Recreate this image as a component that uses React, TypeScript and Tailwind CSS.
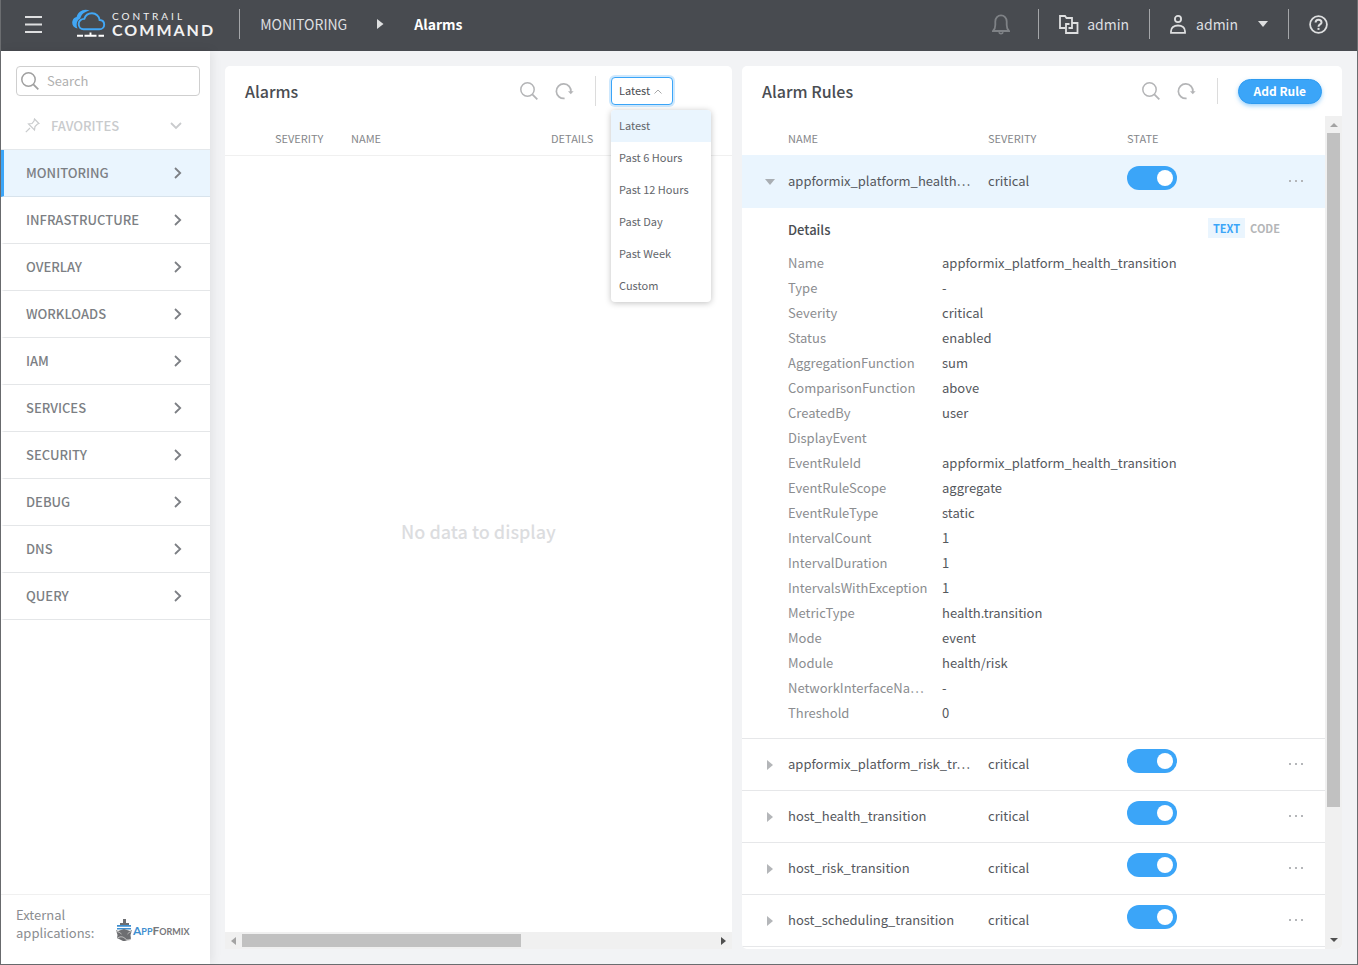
import { useState } from "react";
import clsx from "clsx";

const navItems = [
  "MONITORING",
  "INFRASTRUCTURE",
  "OVERLAY",
  "WORKLOADS",
  "IAM",
  "SERVICES",
  "SECURITY",
  "DEBUG",
  "DNS",
  "QUERY",
];

const timeRanges = [
  "Latest",
  "Past 6 Hours",
  "Past 12 Hours",
  "Past Day",
  "Past Week",
  "Custom",
];

const rules = [
  { name: "appformix_platform_health…", severity: "critical" },
  { name: "appformix_platform_risk_tr…", severity: "critical" },
  { name: "host_health_transition", severity: "critical" },
  { name: "host_risk_transition", severity: "critical" },
  { name: "host_scheduling_transition", severity: "critical" },
];

const details = [
  ["Name", "appformix_platform_health_transition"],
  ["Type", "-"],
  ["Severity", "critical"],
  ["Status", "enabled"],
  ["AggregationFunction", "sum"],
  ["ComparisonFunction", "above"],
  ["CreatedBy", "user"],
  ["DisplayEvent", ""],
  ["EventRuleId", "appformix_platform_health_transition"],
  ["EventRuleScope", "aggregate"],
  ["EventRuleType", "static"],
  ["IntervalCount", "1"],
  ["IntervalDuration", "1"],
  ["IntervalsWithException", "1"],
  ["MetricType", "health.transition"],
  ["Mode", "event"],
  ["Module", "health/risk"],
  ["NetworkInterfaceNa…", "-"],
  ["Threshold", "0"],
];

const SearchIcon = () => (
  <svg width="18" height="18" viewBox="0 0 18 18" fill="none" stroke="currentColor" className="shrink-0">
    <circle cx="7.5" cy="7.5" r="6.7" strokeWidth="1.5" />
    <path d="M12.3 12.3 17.3 17.3" strokeWidth="1.8" />
  </svg>
);

const RefreshIcon = () => (
  <svg width="19" height="18" viewBox="0 0 19 18" fill="none">
    <path
      d="M9.6 16.400A7.300 7.300 0 1 1 15.900 10"
      stroke="currentColor"
      strokeWidth="1.700"
    />
    <path d="M13 9.300h5.600l-2.800 3z" fill="currentColor" />
  </svg>
);

const ChevronRight = () => (
  <svg width="8" height="12" viewBox="0 0 8 12" fill="none" stroke="#7c7f84" strokeWidth="1.8">
    <path d="M1 1l5.2 5L1 11" />
  </svg>
);

const Separator = () => <span className="h-[30px] w-px bg-[#a4a6a9]" />;

const Logo = () => (
  <a href="#" className="flex items-center gap-[6px]">
    <svg width="34" height="30" viewBox="0 0 34 30" fill="none">
      <path
        d="M5.500 19.600C1.600 18.800-.4 15.600.4 12.200 1 9.800 2.600 8.400 4.600 8 5.700 3.600 9.500.800 13.500.700c1.700 0 3.100.300 4.200 1C12.500 2.400 9.500 5.200 8.300 9.400 4.800 10.800 3.600 16 5.500 19.600z"
        fill="#42a7f5"
      />
      <path
        d="M11.500 20.300h15.700c3 0 5-2.100 5-4.600 0-2.600-1.900-4.500-4.600-4.700C27.200 7.200 24 4.300 20 4.300c-3.900 0-6.700 2.300-7.700 5.600-3.100-.1-5.600 2.200-5.600 5.100 0 3.200 2.100 5.300 4.800 5.300z"
        stroke="#42a7f5"
        strokeWidth="1.900"
      />
      <path
        d="M18.500 23.500v2.500M5 26.800h6M12.500 26.800h12M26.500 26.800H32"
        stroke="#fff"
        strokeWidth="1.900"
      />
    </svg>
    <span className="flex flex-col font-[Lato,sans-serif] text-[#f2f2f2]">
      <span className="text-[10px] leading-[12px] tracking-[3px]">CONTRAIL</span>
      <span className="text-[16px] leading-[16px] font-bold tracking-[2px]">
        COMMAND
      </span>
    </span>
  </a>
);

const Header = () => (
  <header className="flex h-[51px] shrink-0 items-center justify-between bg-[#484b50] pr-[29px] pb-[3px] pl-6 text-[14px] text-[#dedfe0]">
    <div className="flex items-center">
      <button aria-label="Toggle menu" className="mr-[30px]">
        <svg width="17" height="17" viewBox="0 0 17 17" stroke="#dedfe0" strokeWidth="1.800">
          <path d="M0 1h17M0 8.500h17M0 16h17" />
        </svg>
      </button>
      <Logo />
      <span className="mr-5 ml-6 flex">
        <Separator />
      </span>
      <a href="#">MONITORING</a>
      <svg width="7" height="10" viewBox="0 0 7 10" className="mx-[30px]">
        <path d="M0 0l6.500 5L0 10z" fill="#dedfe0" />
      </svg>
      <span className="font-bold text-white">Alarms</span>
    </div>
    <div className="flex items-center gap-5">
      <button aria-label="Notifications" className="mr-2 text-[#7f8286]">
        <svg width="18" height="21" viewBox="0 0 18 21" fill="none" stroke="currentColor" strokeWidth="1.800">
          <path d="M1 17h16c-1.700-1.500-2.300-3-2.300-6V7.500C14.700 3.800 12.200 1.400 9 1.400S3.300 3.800 3.300 7.500V11c0 3-.6 4.500-2.300 6z" />
          <path d="M7 18.200c.3 1 1 1.500 2 1.500s1.700-.5 2-1.500" />
        </svg>
      </button>
      <Separator />
      <button className="flex items-center gap-2">
        <svg width="20" height="19" viewBox="0 0 20 19" fill="none" stroke="currentColor" strokeWidth="1.800">
          <path d="M6.500 13H1V1h5l1.500 2H13v10H9.500" />
          <path d="M13 8h5.500v10H7V9h3.500" />
        </svg>
        admin
      </button>
      <Separator />
      <button className="flex items-center gap-[10px]">
        <svg width="16" height="19" viewBox="0 0 16 19" fill="none" stroke="currentColor" strokeWidth="1.800">
          <circle cx="8" cy="4" r="3.100" />
          <path d="M1 17.800v-1.600c0-3.400 2.900-5.700 7-5.700s7 2.300 7 5.700v1.600z" />
        </svg>
        admin
        <svg width="10" height="6" viewBox="0 0 10 6" className="ml-[10px]">
          <path d="M0 0h10L5 6z" fill="currentColor" />
        </svg>
      </button>
      <Separator />
      <button aria-label="Help">
        <svg width="19" height="19" viewBox="0 0 19 19" fill="none" stroke="currentColor" strokeWidth="1.800">
          <circle cx="9.500" cy="9.500" r="8.400" />
          <path d="M6.600 7.600C6.600 5.800 7.800 4.800 9.500 4.800s3 1 3 2.600c0 2-3 2-3 4.300" strokeWidth="2" />
          <path d="M9.500 12.900v2" strokeWidth="2" />
        </svg>
      </button>
    </div>
  </header>
);

const AppFormixLogo = () => (
  <svg width="76" height="24" viewBox="0 0 76 24">
    <path d="M7 1h3v4h3v2H4V5h3z" fill="#6d6e71" />
    <path d="M1 7h14v1.800H1zM1 10h14v1.500H1z" fill="#3f8fd0" />
    <path d="M2 13l6-2 6 2 2-1-1.500 5 .5 4-6 2H7l-6-3 .5-3L0 12z" fill="#6d6e71" />
    <path d="M0 13.500c3 0 4 1.500 5.500 2.500M16 13.500c-2 0-3.500 1.500-4.500 2.500M1 20.500c3-2.500 6-2 8 0s4 2 6 .5" stroke="#c8c8c8" fill="none" />
    <text
      x="17"
      y="17"
      fontFamily="Lato, sans-serif"
      fontWeight="700"
      fontSize="12"
      fill="#3f8fd0"
    >
      A<tspan fontSize="9">PP</tspan>
      <tspan fill="#77787b">F</tspan>
      <tspan fontSize="9" fill="#77787b">ORMIX</tspan>
    </text>
  </svg>
);

const Sidebar = () => (
  <aside className="z-10 flex w-[209px] shrink-0 flex-col bg-white text-[13px] text-[#7c7f84] shadow-[2px_0_10px_rgba(0,0,0,0.08)]">
    <label className="mt-[15px] mr-[10px] ml-[15px] flex h-[30px] items-center gap-2 rounded-[4px] border border-[#cfcfcf] pl-1 text-[#a0a0a0]">
      <SearchIcon />
      <input
        type="search"
        aria-label="Search"
        placeholder="Search"
        className="w-full min-w-0 pb-px outline-none placeholder:text-[#b0b0b0]"
      />
    </label>
    <button className="flex h-[54px] items-center border-b border-[#e4e8eb] pt-[6px] pr-7 pl-6 text-[#c9cbcd]">
      <svg width="15" height="15" viewBox="0 0 15 15" fill="none" stroke="currentColor" strokeWidth="1.200">
        <path d="M9.500 1l4.500 4.500-1.500.5-2.500 2.500-.5 3.500-6-6L7 5.500 9 3zM5 10l-4.200 4.200" />
      </svg>
      <span className="ml-[11px] font-medium">FAVORITES</span>
      <svg width="12" height="8" viewBox="0 0 12 8" fill="none" stroke="currentColor" strokeWidth="1.800" className="ml-auto">
        <path d="M1 1l5 5 5-5" />
      </svg>
    </button>
    <nav>
      {navItems.map((item, i) => (
        <a
          key={item}
          href="#"
          className={clsx(
            "flex h-[47px] items-center justify-between border-b border-l-[3px] pr-7 pl-[22px] font-medium",
            i === 0
              ? "border-b-[#d8e3ec] border-l-[#3ba5f8] bg-[#eaf5fe]"
              : "border-b-[#e4e6e8] border-l-transparent"
          )}
        >
          {item}
          <ChevronRight />
        </a>
      ))}
    </nav>
    <div className="mt-auto flex h-[70px] items-start justify-between border-t border-[#f0f0f0] pt-[11px] pr-[18px] pl-[15px] leading-[18px] text-[#8b8d90]">
      <span className="w-20">External applications:</span>
      <a href="#" aria-label="AppFormix" className="pt-3">
        <AppFormixLogo />
      </a>
    </div>
  </aside>
);

const TimeRange = () => {
  const [range, setRange] = useState("Latest");
  return (
    <div className="relative text-[11px]">
      <select
        aria-label="Time range"
        value={range}
        onChange={(e) => setRange(e.target.value)}
        className="block h-7 w-[62px] appearance-none rounded-[4px] border border-[#3ba5f8] bg-white pb-px pl-[7px] text-[#4a4d52] shadow-[0_0_0_2px_rgba(59,165,248,0.25)] outline-none"
      >
        {timeRanges.map((r) => (
          <option key={r}>{r}</option>
        ))}
      </select>
      <svg width="8" height="5" viewBox="0 0 8 5" fill="none" stroke="#a8a8a8" className="pointer-events-none absolute top-3 right-[11px]">
        <path d="M.5 4.500L4 1l3.500 3.500" />
      </svg>
      <ul className="absolute top-[33px] left-0 z-20 w-[100px] overflow-hidden rounded-[4px] bg-white text-[#63666b] shadow-[0_1px_6px_rgba(0,0,0,0.25)]">
        {timeRanges.map((r) => (
          <li key={r}>
            <button
              onClick={() => setRange(r)}
              className={clsx(
                "block h-8 w-full px-2 text-left",
                r === range && "bg-[#eaf5fe]"
              )}
            >
              {r}
            </button>
          </li>
        ))}
      </ul>
    </div>
  );
};

const PanelTools = () => (
  <div className="flex items-center gap-[17px] text-[#b4b5b7]">
    <button aria-label="Search">
      <SearchIcon />
    </button>
    <button aria-label="Refresh">
      <RefreshIcon />
    </button>
  </div>
);

const AlarmsPanel = () => (
  <section className="flex min-w-0 flex-col rounded-[5px] bg-white">
    <div className="flex h-[49px] shrink-0 items-center pr-[59px] pl-5">
      <h2 className="mr-auto text-[16px] font-medium text-[#4a4d52]">Alarms</h2>
      <PanelTools />
      <span className="mr-[15px] ml-[21px] h-[30px] w-px bg-[#dcdcdc]" />
      <TimeRange />
    </div>
    <table className="w-full table-fixed text-left text-[11px] text-[#85878b]">
      <thead>
        <tr className="h-10 border-b border-[#f0f0f0]">
          <th className="w-[126px] pt-[6px] pl-[50px] font-normal">SEVERITY</th>
          <th className="w-[200px] pt-[6px] font-normal">NAME</th>
          <th className="pt-[6px] font-normal">DETAILS</th>
        </tr>
      </thead>
    </table>
    <div className="flex flex-1 items-center justify-center pb-6 text-[18px] font-medium text-[#dcdddf]">
      No data to display
    </div>
    <div className="flex h-[17px] items-center bg-[#f0f0f0] px-[6px]">
      <svg width="5" height="8" viewBox="0 0 5 8">
        <path d="M5 0v8L0 4z" fill="#a3a3a3" />
      </svg>
      <div className="mx-[6px] flex-1">
        <div className="h-[13px] w-[59%] bg-[#c1c1c1]" />
      </div>
      <svg width="5" height="8" viewBox="0 0 5 8">
        <path d="M0 0v8l5-4z" fill="#505050" />
      </svg>
    </div>
  </section>
);

const RuleDetails = () => (
  <div className="pt-2 pr-[45px] pb-[13px] pl-[46px]">
    <div className="flex h-[34px] items-start justify-between pt-[2px]">
      <h3 className="leading-6 font-medium text-[#4a4d52]">Details</h3>
      <div className="flex text-[11px] leading-5 font-bold">
        <button className="bg-[#eaf5fe] px-[5px] text-[#3ba5f8]">TEXT</button>
        <button className="pl-[5px] text-[#b4b6b8]">CODE</button>
      </div>
    </div>
    <dl>
      {details.map(([label, value]) => (
        <div key={label} className="flex h-[25px] leading-[25px]">
          <dt className="w-[154px] shrink-0 text-[#8b8d90]">{label}</dt>
          <dd>{value}</dd>
        </div>
      ))}
    </dl>
  </div>
);

const RuleRow = ({ rule, open }: { rule: (typeof rules)[0]; open: boolean }) => {
  const [enabled, setEnabled] = useState(true);
  return (
    <>
      <tr
        className={clsx(open ? "h-[53px] bg-[#eaf5fe]" : "h-[52px] border-b border-[#e6e7e9]")}
      >
        <td>
          <button aria-label="Expand row" className="flex w-full justify-center pl-[10px]">
            {open ? (
              <svg width="10" height="6" viewBox="0 0 10 6">
                <path d="M0 0h10L5 6z" fill="#a9aeb3" />
              </svg>
            ) : (
              <svg width="6" height="10" viewBox="0 0 6 10">
                <path d="M0 0v10l6-5z" fill="#b4b6b9" />
              </svg>
            )}
          </button>
        </td>
        <td className="pb-[2px] whitespace-nowrap">{rule.name}</td>
        <td className="pb-[2px]">{rule.severity}</td>
        <td>
          <input
            type="checkbox"
            aria-label={rule.name}
            checked={enabled}
            onChange={() => setEnabled(!enabled)}
            className="mb-[7px] flex h-6 w-[50px] appearance-none items-center rounded-full bg-[#c1c1c1] px-1 before:size-4 before:rounded-full before:bg-white before:content-[''] checked:justify-end checked:bg-[#3ba5f8]"
          />
        </td>
        <td className="pr-[22px] pb-[2px]">
          <button aria-label="Row actions" className="ml-auto block">
            <svg width="14" height="2" viewBox="0 0 14 2" fill="#b4b6b9">
              <path d="M0 0h2v2H0zM6 0h2v2H6zM12 0h2v2h-2z" />
            </svg>
          </button>
        </td>
      </tr>
      {open && (
        <tr className="border-b border-[#e6e7e9]">
          <td colSpan={5}>
            <RuleDetails />
          </td>
        </tr>
      )}
    </>
  );
};

const RulesPanel = () => (
  <section className="flex min-h-0 min-w-0 flex-col overflow-hidden rounded-[5px] bg-white">
    <div className="flex h-[50px] shrink-0 items-center pr-5 pl-5">
      <h2 className="mr-auto text-[16px] font-medium text-[#4a4d52]">Alarm Rules</h2>
      <PanelTools />
      <span className="mr-5 ml-[21px] h-[26px] w-px bg-[#dcdcdc]" />
      <button className="h-[25px] rounded-full border border-[#2f9bf0] bg-[#3ba5f8] px-[15px] text-[12px] font-bold text-white shadow-[0_2px_4px_rgba(59,165,248,0.5)]">
        Add Rule
      </button>
    </div>
    <div className="flex min-h-0 flex-1">
      <div className="min-w-0 flex-1 overflow-hidden">
        <table className="w-full table-fixed text-left text-[13px] text-[#55585d]">
          <thead>
            <tr className="h-[39px] text-[11px] text-[#85878b]">
              <th className="w-[46px]" />
              <th className="w-[200px] pt-[6px] font-normal">NAME</th>
              <th className="w-[139px] pt-[6px] font-normal">SEVERITY</th>
              <th className="w-[100px] pt-[6px] font-normal">STATE</th>
              <th />
            </tr>
          </thead>
          <tbody>
            {rules.map((rule, i) => (
              <RuleRow key={rule.name} rule={rule} open={i === 0} />
            ))}
          </tbody>
        </table>
      </div>
      <div className="flex w-[17px] flex-col items-center bg-[#f0f0f0] py-[7px]">
        <svg width="8" height="4" viewBox="0 0 8 4">
          <path d="M0 4h8L4 0z" fill="#a3a3a3" />
        </svg>
        <div className="my-[6px] flex-1">
          <div className="h-[84.4%] w-[13px] bg-[#c1c1c1]" />
        </div>
        <svg width="8" height="4" viewBox="0 0 8 4">
          <path d="M0 0h8L4 4z" fill="#505050" />
        </svg>
      </div>
    </div>
  </section>
);

export default function App() {
  return (
    <div className="flex h-screen flex-col border-x border-b border-[#6b6d70] bg-[#f2f3f5] font-['Noto_Sans_CJK_KR','Noto_Sans',sans-serif]">
      <Header />
      <div className="flex min-h-0 flex-1">
        <Sidebar />
        <main className="grid min-w-0 flex-1 grid-cols-[507fr_600fr] grid-rows-[minmax(0,1fr)] gap-[10px] pt-[15px] pr-[15px] pb-[15px] pl-[15px]">
          <AlarmsPanel />
          <RulesPanel />
        </main>
      </div>
    </div>
  );
}
